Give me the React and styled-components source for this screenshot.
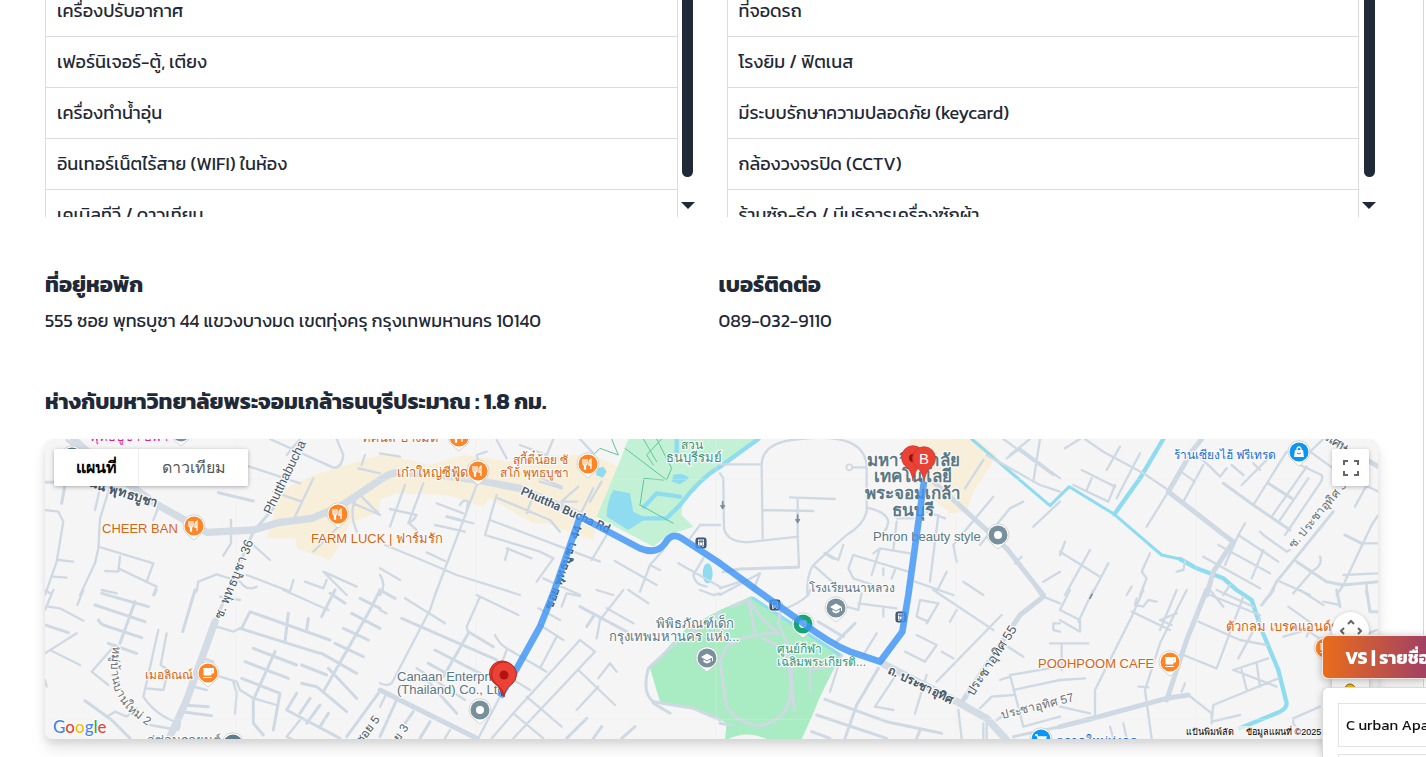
import React from "react";
import styled, { createGlobalStyle } from "styled-components";

const UI_FONT = `"Kanit", "Noto Sans", "Open Sans", sans-serif`;
const MAP_FONT = `"Liberation Sans", "Noto Sans", sans-serif`;

const GlobalStyle = createGlobalStyle`
  *, *::before, *::after { box-sizing: border-box; }
  body {
    margin: 0;
    background: #ffffff;
    color: #1f2937;
    font-family: ${UI_FONT};
    overflow: hidden;
  }
  h2, p { margin: 0; }
  button { font: inherit; border: 0; padding: 0; cursor: pointer; }
`;

const Page = styled.main`
  min-height: 100vh;
  margin-right: 2px;
  padding: 0 45px 16px;
  border-right: 1px solid #d4d7de;
  overflow: hidden;
`;

const Facilities = styled.section`
  display: grid;
  grid-template-columns: 1fr 1fr;
  gap: 30px;
`;

const ScrollBox = styled.div`
  display: flex;
  height: 217px;
  overflow: hidden;
`;

const Table = styled.table`
  flex: 1;
  align-self: flex-start;
  margin-top: -15px;
  border-collapse: collapse;
  font-size: 18px;
  line-height: 24px;
`;

const Cell = styled.td`
  height: 51px;
  padding: 0 11px;
  border: 1px solid #dcdcdc;
`;

const ScrollBar = styled.div`
  display: flex;
  flex-direction: column;
  align-items: center;
  justify-content: space-between;
  width: 19px;
  padding: 0 0 8px 1px;
`;

const Thumb = styled.div`
  width: 11px;
  height: 177px;
  border-radius: 0 0 6px 6px;
  background: #1f2937;
`;

const DownArrow = styled.div`
  border: 7px solid transparent;
  border-top-color: #1f2937;
  border-bottom-width: 0;
`;

const InfoGrid = styled.section`
  display: grid;
  grid-template-columns: 1fr 1fr;
  gap: 14px;
  margin-top: 50px;
`;

const Heading = styled.h2`
  font-size: 22px;
  line-height: 36px;
  font-weight: 700;
  white-space: nowrap;
`;

const Detail = styled.p`
  font-size: 18px;
  line-height: 36px;
`;

const Distance = styled.section`
  margin-top: 45px;
`;

const MapCard = styled.div`
  position: relative;
  height: 300px;
  margin-top: 19px;
  border-radius: 8px;
  overflow: hidden;
  background: #f5f5f5;
`;

const MapShadow = styled.div`
  border-radius: 8px;
  box-shadow: 0 10px 15px rgba(0, 0, 0, 0.1), 0 4px 6px rgba(0, 0, 0, 0.08);
`;

const MapSvg = styled.svg`
  display: block;
  width: 100%;
  height: 300px;
  font-family: ${MAP_FONT};
`;

const MapTypes = styled.div`
  position: absolute;
  top: 10px;
  left: 9px;
  display: flex;
  border-radius: 2px;
  overflow: hidden;
  box-shadow: 0 1px 4px rgba(0, 0, 0, 0.3);
`;

const MapType = styled.button`
  width: ${(p) => (p.$active ? 85 : 109)}px;
  height: 37px;
  background: #fff;
  border-right: ${(p) => (p.$active ? "1px solid #eee" : "0")};
  color: ${(p) => (p.$active ? "#000" : "#565656")};
  font-family: Roboto, ${MAP_FONT};
  font-size: 16px;
  font-weight: ${(p) => (p.$active ? 600 : 400)};
`;

const MapTools = styled.div`
  position: absolute;
  top: 10px;
  right: 9px;
  bottom: 0;
  display: flex;
  flex-direction: column;
  gap: 10px;
`;

const ToolButton = styled.button`
  display: grid;
  place-items: center;
  flex: none;
  width: 37px;
  height: 37px;
  border-radius: ${(p) => (p.$round ? "50%" : "2px")};
  background: #fff;
  box-shadow: 0 1px 4px rgba(0, 0, 0, 0.25);
`;

const ToolStack = styled.div`
  display: flex;
  flex-direction: column;
  gap: 28px;
  height: 127px;
  margin-top: auto;
`;

const Attribution = styled.div`
  position: absolute;
  right: 0;
  bottom: 0;
  display: flex;
  gap: 12px;
  width: 192px;
  height: 13px;
  background: rgba(245, 245, 245, 0.7);
  color: #000;
  font-family: ${MAP_FONT};
  font-size: 9px;
  line-height: 13px;
  white-space: nowrap;
`;

const ComparePanel = styled.aside`
  position: fixed;
  right: 0;
  bottom: 0;
  width: 104px;
  display: flex;
  flex-direction: column;
  gap: 8px;
  white-space: nowrap;
`;

const CompareToggle = styled.button`
  height: 44px;
  padding-left: 22px;
  border: 1px solid #f3e4e0;
  border-right: 0;
  border-radius: 6px 0 0 6px;
  background: linear-gradient(90deg, #ea6c1b, #a14164);
  box-shadow: 0 2px 8px rgba(0, 0, 0, 0.3);
  color: #fff;
  font-size: 18px;
  font-weight: 700;
  text-align: left;
  overflow: hidden;
`;

const CompareList = styled.ul`
  display: flex;
  flex-direction: column;
  gap: 7px;
  height: 70px;
  margin: 0;
  padding: 15px 0 0 15px;
  border: 1px solid #d9d9de;
  border-right: 0;
  border-bottom: 0;
  border-radius: 6px 0 0 0;
  background: #fff;
  box-shadow: 0 2px 8px rgba(0, 0, 0, 0.2);
  list-style: none;
  overflow: hidden;
`;

const CompareItem = styled.li`
  flex: none;
  height: 44px;
  padding-left: 7px;
  border: 1px solid #e2e2e6;
  border-right: 0;
  color: #111;
  font-size: 15px;
  line-height: 42px;
  overflow: hidden;
`;

/* Map geometry is drawn at three units per pixel, in 1020 x 465 tiles. */
const TILES = [
  { x: 0, y: 0,
    minor: "M65 205L75 150M165 225L180 160M340 255L360 205M600 85L780 145M700 170L785 200M890 12L910 60Q905 100 880 98L690 12M820 130L765 245M955 100L1020 115M965 90L975 60M573 255V325L550 362M640 330L690 375M15 225L55 230L70 260L50 380L15 480M55 375L100 380M40 425L80 428M210 155L180 250L175 340L165 385L120 480M175 335L340 385L320 440M240 365L235 410L195 408M235 400L350 455L340 480M185 465L230 475M470 470L475 440L530 418L600 440Q620 470 650 455M850 410L950 455M620 420L750 470L760 435M795 440L850 460L860 435M850 410L920 480M900 270L820 350M940 205L1020 240M960 180Q930 200 940 260L950 290M780 12L740 60M80 15L150 75M960 180L1020 240",
    mid: "M535 173L640 198M700 220L640 290L525 560M65 205L75 150M0 142H60",
    major: "M100 12L200 100L345 205L460 270L500 292L640 285L720 262L815 250L900 215L1020 135" },
  { x: 1020, y: 0,
    minor: "M75 150L30 275M130 145L85 265M290 150L165 480M170 205L250 235M200 245L280 265M165 270L255 290M30 222L110 240Q100 260 85 262L115 290M240 210Q250 190 265 200L260 225M350 180L315 300L480 350L520 370M355 190L510 255L540 290M330 255L660 380M15 330L125 375L230 420L420 480M140 352L195 378M385 340L375 375M455 370L380 340M520 370L470 440M490 430L600 480M595 155L555 190L545 200L590 200M640 160L600 240M665 140L630 200M680 300L635 375M705 378L830 450M895 385L1020 455M850 345L810 390L780 470M960 270H1020M960 270L930 310M970 370L940 420Q945 450 980 455M440 235L460 180M350 15L380 70M420 30L500 60L520 12M600 12L640 55M0 400L60 435M300 100L290 60L320 50M0 55L60 65M480 140L545 160M810 390L840 405M650 465L700 480M460 120L545 155M0 420Q20 450 0 480",
    mid: "M200 245L240 255", major: "M0 135Q30 112 60 112L180 120L290 135L420 160L600 240" },
  { x: 2040, y: 0,
    minor: "M240 12Q125 20 125 90L128 310M240 12Q440 -10 440 100V230Q430 270 380 300L285 385Q260 410 262 480M0 88H120M0 115L10 130L12 280Q20 320 80 322L235 305M210 187L345 192M233 190V300L237 395M130 225L280 228M390 97H440M440 218Q500 230 505 260L500 280Q480 300 490 310M530 260L520 345M530 250H580M460 355L480 340L570 355M480 340L455 420M400 360L385 400L400 430L460 450M400 360L565 410M490 400V420M525 405L515 430M620 230L675 250M655 240L630 440M585 440L700 480M820 185L700 330L710 380M910 200L870 220L780 330M680 410L650 470M730 440L790 480M315 355L355 375L370 330M285 395L370 470M120 415L100 465M960 12L940 140M930 12L870 60M850 12L1000 120M790 75L735 160M970 440L1020 410M905 365L885 385M1020 200L940 275M860 70L900 40L1020 130M800 60L960 150L1020 170M0 460L60 440M0 480L120 415",
    mid: "M235 397L60 402L10 410M315 355L340 370", major: "", avenue: "M640 140L690 185L860 340L970 480" },
  { x: 3060, y: 0,
    minor: "M325 170L260 275M325 165L250 115L130 50L75 12M65 105L165 155M95 130L80 165M165 150L145 200L40 150M240 55L170 190M180 35L140 105M60 12L15 40M370 115L405 140M430 90L370 200M400 50L450 95L480 125L500 100M515 90L550 120M545 150L640 55M580 210L680 50M625 145L695 190M635 245L740 95M720 90L785 120Q790 130 780 145L675 300M660 255L745 130M790 12L740 60M750 50L820 100M920 150L885 215M955 170L915 150M955 240L935 270L850 450L830 480M855 300L905 325H955M600 290L610 300L680 350L690 345M555 265L535 300L495 390M535 300L655 380M475 330L630 415M430 365L600 460M610 345L575 430M850 420L955 415M780 365Q790 390 755 410L700 475M920 450V480M90 345L15 480M0 350L120 425M145 385L95 480M15 320L0 360M270 355L245 410L260 430L240 480M215 455L200 480M350 410L370 405L375 380M660 440L750 480M580 85L600 105M510 450L490 480",
    mid: "M490 145L580 210L690 285M820 230L650 440L630 480M710 380L800 440L850 450L955 440M855 300L905 325M625 145L695 190", major: "",
    avenue: "M425 12L395 50L325 170L480 290L520 320L460 410L440 480M880 50L955 95" },
  { x: 0, y: 465,
    minor: "M25 50L60 55L130 92M110 130L15 190M30 180L120 225M130 0L112 45M350 0L343 15M200 380L225 365L260 380L290 355M355 120L310 320Q350 380 420 400L415 420L330 405M380 130L362 225L385 240L370 300L320 295M490 205L520 215M540 260L590 275L600 300L640 325L710 345M530 110L580 125L600 115M580 275L590 310L585 370M460 290L500 300M730 0L865 60M15 0L30 10M15 60L40 0M540 20L600 30M780 390L740 440L820 480M205 285L155 245L225 165M15 270L20 290",
    mid: "M240 160L285 35M165 45L315 95M185 10L325 50M15 105L85 128M175 90Q180 100 190 105L305 143M205 160L290 190M135 332L215 390L270 445M465 0L428 125M430 345L505 350M425 365L515 377M605 115L630 65L870 150M600 115L840 190M745 70L735 155M805 85L800 120M640 175L770 225M705 185L640 330L640 400L670 435M615 215L745 265M605 265L720 310L700 420M885 0L845 80M870 10L915 40M960 25L1020 55M1020 0L990 60L850 305M935 70L1020 115M910 115L985 150M885 160L970 200M845 190L950 250M865 235L950 325M785 225L860 255M785 280L830 290L920 365M770 310L740 360L900 445M810 325L780 370M840 345L800 400M865 370L840 410M1015 310L920 440",
    major: "M525 95L440 330L390 440" },
  { x: 1020, y: 465,
    minor: "M170 0L150 60L35 280Q20 290 0 280M75 25L195 100M290 15L415 75M300 20L260 110L265 130M110 235L255 330M0 350L20 310M150 395L120 445M210 420L195 445M345 135Q360 165 380 175L500 245M380 180L350 260M480 105L550 150M530 140L480 235M295 445L360 320M335 445L400 370L600 150L645 185L400 445M400 370L490 445M440 320L545 410M595 240L705 345M655 290L590 360M690 220L655 265M690 220L710 245M385 260L450 300M475 55L540 90M545 50L560 10L600 18M730 0L660 90L650 145M680 55L760 100M745 0L805 40M960 0L1000 15L1020 10M0 60L20 70",
    mid: "M0 0L45 25M65 85L350 210M265 125L340 170M265 130L190 260M165 180L300 250M145 220L235 270M140 270L230 370M50 330L0 440M100 365L75 400M600 50L740 125M640 80L620 110M620 385L560 445M665 410L640 445M765 410L725 445M820 340L870 370M1020 70L880 165L805 235Q785 310 820 335L940 355L1020 390M150 395L120 445",
    avenue: "M0 300L100 350L290 445", major: "" },
  { x: 2040, y: 465,
    minor: "M270 235V305M365 195L330 305M270 240L330 230M475 235L410 345M525 260L465 350L520 360M620 255L585 370M555 185L615 215L650 165L590 135M665 185L700 205M650 275L845 75M640 0L820 120M710 60L690 95M600 30L590 80L625 95M655 40L620 100M970 20L1020 40M1020 100H1000V120L1020 125M840 155L910 200M990 160H1020M780 355L815 320L880 315M870 255L1020 230M880 300L1020 270M840 270L870 260M870 255L910 410L1020 380M830 390L860 370M715 360L725 445M790 400V445M800 400V445M415 40L530 55M425 10L415 60L380 50M490 55V80M470 130L430 195M270 0L265 15Q240 40 185 60M600 30L655 40",
    mid: "M85 30L105 125M35 50L85 30L130 90L170 125M0 215L20 170Q70 130 175 130M0 215L20 350Q50 400 120 407Q200 390 210 320L215 300L200 180L130 145M185 40L175 100L210 180L222 360M315 328L500 395L665 430M290 375L500 445M275 425L330 445M475 235L410 345L375 445M600 420L590 445M295 95L370 140M405 100L350 155M880 440L1020 410M0 400L30 405",
    avenue: "M730 330L850 150L900 75L970 20L950 -10", major: "M490 222L720 340L800 385L860 450" },
  { x: 3060, y: 465,
    minor: "M250 0L215 80L120 270L105 300V380M230 25L225 45L250 50L265 30L290 35M215 65L330 120M350 0L300 120M350 70L300 90L335 105M380 0L300 160L255 300L275 445M450 15L600 75M550 20L470 235M415 95L540 150L620 165M370 195L470 235M600 85L535 205M520 240L650 290M520 240L625 205M590 220L600 290M545 240L560 300M540 375L455 395L460 345L655 265M385 315L455 370V400M365 305L375 280M235 290L265 292M0 60L60 90V125L0 90M100 0L55 95M0 160H85M5 160V240M0 270L75 265M0 350L90 370M685 50L755 100L740 140M720 0L790 45M790 35L840 45M950 120L925 130L870 160M780 350L700 385V400L720 430M670 140L740 120L800 160M30 0L0 60M470 0L580 50M450 0L490 50M150 410L160 445M190 400L200 445",
    mid: "M640 0L605 45M920 0L930 65L955 65M840 50L830 0",
    avenue: "M0 410L80 390L320 325L385 315M440 0L380 150L320 330", major: "" },
];

const ROUTE =
  "M1380 785L1425 710L1500 575L1540 475L1620 245M1620 245L1800 340Q1850 360 1875 325Q1895 290 1925 310L2040 385L2150 465L2290 565Q2370 625 2430 650L2520 680L2587 590L2605 480L2652 140";

const ORANGE = "#d9640f";
const SLATE = "#5b7885";
const ROAD_TEXT = "#4b5b6b";
const GREY_TEXT = "#6b7178";

const LABELS = [
  { x: 102, y: 533, c: ORANGE, s: 13, t: "CHEER BAN" },
  { x: 311, y: 543, c: ORANGE, s: 13, t: "FARM LUCK | ฟาร์มรัก" },
  { x: 397, y: 477, c: ORANGE, s: 13, t: "เก๋าใหญ่ซีฟู้ด" },
  { x: 513, y: 464, c: ORANGE, s: 12, t: "สุกี้ตี๋น้อย ซั" },
  { x: 500, y: 477, c: ORANGE, s: 12, t: "สโก้ พุทธบูชา" },
  { x: 362, y: 442, c: ORANGE, s: 13, t: "ทัศนีส บางมด" },
  { x: 145, y: 679, c: ORANGE, s: 12, t: "เมอลิณณ์" },
  { x: 1038, y: 668, c: ORANGE, s: 13, t: "POOHPOOM CAFE" },
  { x: 1226, y: 631, c: ORANGE, s: 13, t: "ตัวกลม เบรคแอนด์ช" },
  { x: 90, y: 441, c: "#e6199a", s: 13, t: "พุทธบูชา อพา" },
  { x: 681, y: 449, c: "#3f8f76", s: 12, t: "สวน" },
  { x: 666, y: 462, c: "#3f8f76", s: 13, t: "ธนบุรีรมย์" },
  { x: 777, y: 653, c: "#2d9a78", s: 12, t: "ศูนย์กีฬา" },
  { x: 777, y: 666, c: "#2d9a78", s: 12, t: "เฉลิมพระเกียรติ..." },
  { x: 656, y: 628, c: SLATE, s: 13, t: "พิพิธภัณฑ์เด็ก" },
  { x: 609, y: 641, c: SLATE, s: 13, t: "กรุงเทพมหานคร แห่ง..." },
  { x: 809, y: 592, c: SLATE, s: 12, t: "โรงเรียนนาหลวง" },
  { x: 873, y: 541, c: SLATE, s: 13, t: "Phron beauty style" },
  { x: 397, y: 681, c: SLATE, s: 13, t: "Canaan Enterprise" },
  { x: 397, y: 694, c: SLATE, s: 13, t: "(Thailand) Co., Ltd" },
  { x: 147, y: 745, c: SLATE, s: 13, t: "อู่ซ่อมรถยนต์" },
  { x: 1174, y: 459, c: "#1b6fd8", s: 12, t: "ร้านเซียงไฮ้ ฟรีเทรด" },
  { x: 1056, y: 745, c: "#1b6fd8", s: 12, t: "ตลาดใหม่ทุ่งครุ" },
  { x: 913, y: 466, c: SLATE, s: 17, w: 600, m: 1, t: "มหาวิทยาลัย" },
  { x: 913, y: 482, c: SLATE, s: 17, w: 600, m: 1, t: "เทคโนโลยี" },
  { x: 913, y: 499, c: SLATE, s: 17, w: 600, m: 1, t: "พระจอมเกล้า" },
  { x: 913, y: 516, c: SLATE, s: 17, w: 600, m: 1, t: "ธนบุรี" },
  { x: 80, y: 484, c: ROAD_TEXT, s: 13, r: 17, w: 600, t: "ถนน พุทธบูชา" },
  { x: 271, y: 515, c: ROAD_TEXT, s: 13, r: -64, w: 500, t: "Phutthabucha 36" },
  { x: 222, y: 620, c: ROAD_TEXT, s: 13, r: -68, w: 500, t: "ซ. พุทธบูชา 36" },
  { x: 520, y: 494, c: ROAD_TEXT, s: 12, r: 24, w: 600, f: "Roboto, sans-serif", t: "Phuttha Bucha Rd" },
  { x: 552, y: 610, c: ROAD_TEXT, s: 12, r: -70, w: 600, t: "ซอย พุทธบูชา 44" },
  { x: 887, y: 673, c: ROAD_TEXT, s: 12, r: 26, w: 600, t: "ถ. ประชาอุทิศ" },
  { x: 973, y: 697, c: ROAD_TEXT, s: 13, r: -57, w: 500, t: "ประชาอุทิศ 55" },
  { x: 1002, y: 719, c: GREY_TEXT, s: 12, r: -14, t: "ประชาอุทิศ 57" },
  { x: 1294, y: 549, c: GREY_TEXT, s: 12, r: -50, t: "ซ. ประชาอุทิศ 37" },
  { x: 1322, y: 438, c: ROAD_TEXT, s: 13, r: 32, t: "วิเศษ" },
  { x: 361, y: 745, c: ROAD_TEXT, s: 12, r: -53, t: "ซอย 5" },
  { x: 391, y: 754, c: ROAD_TEXT, s: 12, r: -56, t: "ซอย 3" },
];

const GLYPHS = {
  fork: <path d="M-5-5V-1Q-5 1-3.500 1V5H-2.500V1Q-1 1-1-1V-5M-3-5V0M3 5V-5Q1-4 1-1V1H3" fill="none" stroke="#fff" strokeWidth="1.300" />,
  cup: <path d="M-5-4.500H5.500V0H3V2H-4V-4.500M-5 4.500H4M3-3V-1H4.500V-3" fill="#fff" stroke="#fff" strokeWidth="1" />,
  dot: <circle r="4" fill="#fff" />,
  school: <path d="M-6-1L0-4.500L6-1L0 2.500ZM-3.500 1.500V4L0 5.500L3.500 4V1.500L0 3.500ZM5-1V3H6V-1" fill="#fff" />,
  bag: <g><path d="M-4-2H4L5 5H-5Z" fill="#fff" /><path d="M-2-2Q-2-5 0-5T2-2" fill="none" stroke="#fff" strokeWidth="1.300" /><path d="M-2 1Q0 3 2 1" fill="none" stroke="#0b95f5" /></g>,
  cart: <path d="M-6-4H-4L-2 2H4L5-2H-3" fill="#fff" stroke="#fff" strokeWidth="1.400" />,
};

const PLACES = [
  [194, 526, "#ff8424", "fork"], [338, 514, "#ff8424", "fork"], [478, 471, "#ff8424", "fork"],
  [588, 464, "#ff8424", "fork"], [459, 437, "#ff8424", "fork"], [208, 673, "#ff8424", "cup"],
  [1170, 662, "#ff8424", "cup"], [1325, 648, "#ff8424", "cup"], [998, 535, "#78909c", "dot"],
  [480, 710, "#78909c", "dot"], [803, 624, "#17a673", "dot"], [836, 608, "#78909c", "school"],
  [707, 658, "#78909c", "school"], [1299, 452, "#0b95f5", "bag"], [1041, 739, "#0b95f5", "cart"],
  [233, 744, "#607d8b", "dot"], [72, 457, "#607d8b", "dot"], [181, 432, "#78909c", "dot"],
];

function Place({ x, y, color, glyph }) {
  return (
    <g transform={`translate(${x} ${y})`}>
      <path d="M0 14L-6 9A11 11 0 1 1 6 9Z" fill="#fff" stroke="#bbb" strokeWidth="0.600" />
      <circle r="9.500" fill={color} />
      {GLYPHS[glyph]}
    </g>
  );
}

function BusStop({ x, y }) {
  return (
    <g transform={`translate(${x} ${y})`}>
      <rect x="-6" y="-6" width="12" height="12" rx="3" fill="#455a76" stroke="#fff" strokeWidth="0.800" />
      <path d="M-3-3.500H3V2.500H-3Z" fill="#fff" />
      <path d="M-2-2H2V-1H-2ZM-2 1H-1M1 1H2" fill="none" stroke="#455a76" strokeWidth="1" />
      <path d="M-2 3V4M2 3V4" stroke="#fff" strokeWidth="1.200" />
    </g>
  );
}

function Pin({ x, y, letter }) {
  if (letter !== undefined) {
    return (
      <g transform={`translate(${x} ${y})`}>
        <path
          d="M0 23C-1 15-4 11-8 7.500A11.500 11.500 0 1 1 8 7.500C4 11 1 15 0 23Z"
          fill="#ea4335"
          stroke="#c5302a"
          strokeWidth="0.700"
        />
        {letter ? (
          <text y="5" textAnchor="middle" fontSize="15" fill="#fff">{letter}</text>
        ) : (
          <circle r="4" fill="#8f1410" />
        )}
      </g>
    );
  }
  return (
    <g transform={`translate(${x} ${y})`}>
      <path
        d="M0 22C-1 15-4 12-8 9A12.500 12.500 0 1 1 8 9C4 12 1 15 0 22Z"
        fill="#ea4335"
        stroke="#b31412"
        strokeWidth="0.800"
      />
      <circle r="4.500" fill="#b31412" />
    </g>
  );
}

function MapDrawing() {
  return (
    <MapSvg viewBox="0 0 1333 300" preserveAspectRatio="xMinYMid slice" role="img" aria-label="แผนที่">
      <g transform="translate(-5 -4) scale(0.33333)" fill="none" strokeLinecap="round" strokeLinejoin="round">
        <g fill="#f8efdb">
          <path d="M720 170L820 120L1020 60V230L930 265L900 330L870 375L770 340L765 310L680 310Z" />
          <path d="M1020 55L1170 90L1270 60L1420 80L1500 60H1660L1735 95L1720 130L1670 250L1660 315L1610 300L1520 265H1480L1350 190L1330 215L1220 180L1070 175L1020 195Z" />
          <path d="M2610 12H2810L2870 60L2840 110L2800 170L2780 230L2730 235L2690 200L2610 130Z" />
        </g>
        <path fill="#c3f1d5" d="M1765 12L1735 90L1670 245L1840 335L1885 300L1960 275L1925 240Q1920 190 1980 150L2040 90L2155 12Z" />
        <path fill="#a9ebc3" d="M2135 483L2040 525L1940 580L1890 630L1830 700L1860 800L1960 820L2040 853L2060 865L2055 912H2065Q2120 885 2180 912H2285L2320 835L2340 785L2380 705L2410 660L2290 585Z" />
        <path fill="#8fdcf0" d="M1720 165L1770 175L1780 230L1820 250L1765 285L1700 245Q1700 200 1720 165ZM1670 100L1690 95L1700 110L1688 128L1668 120ZM1900 120Q1930 110 1948 130L1920 148L1895 140Z" />
        <ellipse cx="2003" cy="415" rx="15" ry="30" fill="#8fdcf0" />
        <g stroke="#8fdcf0" strokeWidth="13">
          <path d="M2155 12L2040 95Q1980 130 1920 210L1880 250H1800M1812 215L1850 175L1920 185M1910 12V60" />
          <path d="M3370 12L3300 130L3223 238" />
          <path d="M3420 372L3470 400L3550 430L3590 465L3635 495L3665 585L3715 705L3740 805Q3740 820 3720 830L3600 880" />
        </g>
        <path d="M2795 12L3030 212L3088 155L3223 238L3365 360L3420 372L3470 400M2140 490L2400 660" stroke="#8fdcf0" strokeWidth="9" />
        <path d="M1755 40L1880 135L1895 100L1850 12M1810 12L1850 80M1800 210L1812 130L1870 135M1800 210L1900 265M1715 12L1735 60L1680 40L1660 60M1865 12L1820 60L1840 90" stroke="#5fc49c" strokeWidth="3" />
        <g stroke="#cfd9e3">
          {TILES.map((tile) => (
            <g key={`${tile.x}-${tile.y}`} transform={`translate(${tile.x} ${tile.y})`}>
              <path d={tile.minor} strokeWidth="7" />
              <path d={tile.mid} strokeWidth="9" />
              <path d={tile.avenue} strokeWidth="15" />
              <path d={tile.major} strokeWidth="22" stroke="#d3dce4" />
            </g>
          ))}
        </g>
        <circle cx="2428" cy="97" r="9" fill="#f5f5f5" stroke="#cfd9e3" strokeWidth="5" />
        <path d="M2048 200V220M2043 212L2048 220L2053 212M2273 240V262M2268 254L2273 262L2278 254M3150 490L3156 478" stroke="#7b8d99" strokeWidth="5" />
        <path d="M15 133H4014M15 853H4014M588 12V912M1308 12V912M2028 12V912M2748 12V912M3468 12V912" stroke="#eeeeee" strokeWidth="2" opacity="0.500" />
      </g>

      <g transform="translate(-45 -439)">
        <g stroke="#fafafa" strokeWidth="2.500" strokeLinejoin="round" paintOrder="stroke">
          {LABELS.map((l) => (
            <text
              key={`${l.x}-${l.y}`}
              x={l.x}
              y={l.y}
              fontSize={l.s}
              fontFamily={l.f}
              fontWeight={l.w || 400}
              fill={l.c}
              textAnchor={l.m ? "middle" : "start"}
              transform={l.r ? `rotate(${l.r} ${l.x} ${l.y})` : undefined}
            >
              {l.t}
            </text>
          ))}
          <path id="village-curve" d="M113 646C108 680 112 706 152 728" fill="none" stroke="none" />
          <text fontSize="12" fill={GREY_TEXT}>
            <textPath href="#village-curve">หมู่บ้านบานใหม่ 2</textPath>
          </text>
        </g>
        {PLACES.map(([x, y, color, glyph]) => (
          <Place key={`${x}-${y}`} x={x} y={y} color={color} glyph={glyph} />
        ))}
        <BusStop x={701} y={543} />
        <BusStop x={775} y={605} />
        <BusStop x={901} y={617} />
      </g>

      <g transform="translate(-5 -4) scale(0.33333)" fill="none">
        <path d={ROUTE} stroke="#3f95f7" strokeWidth="20" strokeLinejoin="round" opacity="0.820" />
      </g>

      <g transform="translate(-45 -439)">
        <Pin x={502} y={674} />
        <Pin x={504} y={675} />
        <Pin x={913} y={458} letter="" />
        <Pin x={924} y={459} letter="B" />
        <text x="53" y="733" fontSize="17" fontFamily="Lato, sans-serif" fontWeight="500" stroke="#fff" strokeWidth="2" paintOrder="stroke">
          <tspan fill="#4285f4">G</tspan>
          <tspan fill="#ea4335">o</tspan>
          <tspan fill="#fbbc04">o</tspan>
          <tspan fill="#4285f4">g</tspan>
          <tspan fill="#34a853">l</tspan>
          <tspan fill="#ea4335">e</tspan>
        </text>
      </g>
    </MapSvg>
  );
}

const ROOM = ["เครื่องปรับอากาศ", "เฟอร์นิเจอร์-ตู้, เตียง", "เครื่องทำน้ำอุ่น", "อินเทอร์เน็ตไร้สาย (WIFI) ในห้อง", "เคเบิลทีวี / ดาวเทียม"];
const BUILDING = ["ที่จอดรถ", "โรงยิม / ฟิตเนส", "มีระบบรักษาความปลอดภัย (keycard)", "กล้องวงจรปิด (CCTV)", "ร้านซัก-รีด / มีบริการเครื่องซักผ้า"];

function FacilityTable({ rows }) {
  return (
    <ScrollBox>
      <Table>
        <tbody>
          {rows.map((row) => (
            <tr key={row}>
              <Cell>{row}</Cell>
            </tr>
          ))}
        </tbody>
      </Table>
      <ScrollBar>
        <Thumb />
        <DownArrow />
      </ScrollBar>
    </ScrollBox>
  );
}

export default function App() {
  return (
    <>
      <GlobalStyle />
      <Page>
        <Facilities>
          <FacilityTable rows={ROOM} />
          <FacilityTable rows={BUILDING} />
        </Facilities>

        <InfoGrid>
          <div>
            <Heading>ที่อยู่หอพัก</Heading>
            <Detail>555 ซอย พุทธบูชา 44 แขวงบางมด เขตทุ่งครุ กรุงเทพมหานคร 10140</Detail>
          </div>
          <div>
            <Heading>เบอร์ติดต่อ</Heading>
            <Detail>089-032-9110</Detail>
          </div>
        </InfoGrid>

        <Distance>
          <Heading>ห่างกับมหาวิทยาลัยพระจอมเกล้าธนบุรีประมาณ : 1.8 กม.</Heading>
          <MapShadow>
            <MapCard>
              <MapDrawing />
              <MapTypes>
                <MapType type="button" $active>แผนที่</MapType>
                <MapType type="button">ดาวเทียม</MapType>
              </MapTypes>
              <Attribution>
                <span>แป้นพิมพ์ลัด</span>
                <span>ข้อมูลแผนที่ ©2025</span>
              </Attribution>
              <MapTools>
                <ToolButton type="button" aria-label="เต็มหน้าจอ">
                  <svg width="18" height="18" fill="none" stroke="#666" strokeWidth="2">
                    <path d="M2 6V2H6M12 2H16V6M16 12V16H12M6 16H2V12" />
                  </svg>
                </ToolButton>
                <ToolStack>
                  <ToolButton type="button" $round aria-label="เลื่อนแผนที่">
                    <svg width="24" height="24" fill="none" stroke="#666" strokeWidth="2">
                      <path d="M9 5L12 2L15 5M5 9L2 12L5 15M19 9L22 12L19 15M9 19L12 22L15 19" />
                    </svg>
                  </ToolButton>
                  <ToolButton type="button" aria-label="Street View">
                    <svg width="18" height="26">
                      <circle cx="8" cy="6" r="5" fill="#fbbc04" stroke="#8a6d1a" />
                      <path d="M3 11H13V19H11V25H5V19H3Z" fill="#fbbc04" />
                    </svg>
                  </ToolButton>
                </ToolStack>
              </MapTools>
            </MapCard>
          </MapShadow>
        </Distance>
      </Page>

      <ComparePanel>
        <CompareToggle type="button">VS | รายชื่อหอพัก</CompareToggle>
        <CompareList>
          <CompareItem>C urban Apartment</CompareItem>
          <CompareItem />
        </CompareList>
      </ComparePanel>
    </>
  );
}
